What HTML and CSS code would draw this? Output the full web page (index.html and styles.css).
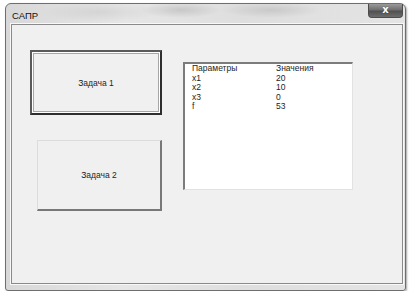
FILE: index.html
```html
<!DOCTYPE html>
<html lang="ru">
<head>
    <meta charset="UTF-8">
    <meta name="viewport" content="width=device-width, initial-scale=1.0">
    <title>САПР</title>
    <link rel="stylesheet" href="styles.css">
</head>
<body>
    <div class="window">
        <!-- заголовок окна -->
        <div class="titlebar">
            <span class="title">САПР</span>
            <span class="close">x</span>
        </div>
        <!-- рабочая область -->
        <div class="client">
            <div class="buttons">
                <button class="btn btn-default">Задача 1</button>
                <button class="btn btn-flat">Задача 2</button>
            </div>
            <div class="listbox">
                <div class="row"><span>Параметры</span><span>Значения</span></div>
                <div class="row"><span>x1</span><span>20</span></div>
                <div class="row"><span>x2</span><span>10</span></div>
                <div class="row"><span>x3</span><span>0</span></div>
                <div class="row"><span>f</span><span>53</span></div>
            </div>
        </div>
    </div>
</body>
</html>
```
FILE: styles.css
```css
*{
    margin: 0;
    padding: 0;
    box-sizing: border-box;
}

body{
    background-color: #ffffff;
    font-family: "Liberation Sans", Arial, sans-serif;
    font-size: 8.5px;
    color: #1e1e1e;
}

.window{
    width: 401px;
    height: 288px;
    margin: 3px 0 0 5px;
    border: 1px solid #6e6e6e;
    border-radius: 6px 6px 3px 3px;
    background: linear-gradient(to right, #d8d8d8, #e6e6e6 30%, #dedede 60%, #e4e4e4);
    padding: 0 2px 6px 5px;
    display: flex;
    flex-direction: column;
    box-shadow: 1px 1px 2px rgba(0,0,0,0.35);
}

.titlebar{
    height: 20px;
    display: flex;
    justify-content: space-between;
    align-items: flex-start;
    background:
        radial-gradient(ellipse 40px 8px at 170px 6px, rgba(150,150,150,0.35), transparent),
        radial-gradient(ellipse 50px 8px at 260px 6px, rgba(150,150,150,0.3), transparent),
        radial-gradient(ellipse 60px 10px at 90px 8px, rgba(170,170,170,0.25), transparent);
}

.title{
    padding: 6px 0 0 1px;
    line-height: 11px;
    font-size: 9.5px;
    color: #111111;
}

.close{
    width: 35px;
    height: 14px;
    border: 1px solid #4c4c4c;
    border-top: none;
    border-radius: 0 0 4px 4px;
    background: linear-gradient(to bottom, #9a9a9a, #6e6e6e 45%, #505050 55%, #6c6c6c);
    color: #ffffff;
    font-family: "DejaVu Sans", sans-serif;
    font-weight: bold;
    font-size: 10px;
    line-height: 12px;
    text-align: center;
    text-shadow: 0 0 1px #333;
}

.client{
    flex: 1;
    border: 1px solid #8a8a8a;
    background-color: #f0f0f0;
    box-shadow: 0 0 0 1px #f8f8f8;
    display: flex;
    align-items: flex-start;
}

.buttons{
    display: flex;
    flex-direction: column;
    align-items: flex-start;
    margin-left: 18px;
    padding-top: 25px;
}

.btn{
    font-family: "Liberation Sans", Arial, sans-serif;
    font-size: 8.5px;
    color: #1e1e1e;
    background-color: #f0f0f0;
}

.btn-default{
    width: 132px;
    height: 65px;
    border: 2px solid #5a5a5a;
    border-right-color: #2e2e2e;
    border-bottom-color: #2e2e2e;
    box-shadow: inset 0 0 0 1px #ffffff, inset 0 0 0 2px #a6a6a6;
}

.btn-flat{
    width: 125px;
    height: 71px;
    margin: 25px 0 0 7px;
    border-top: 1px solid #dcdcdc;
    border-left: 1px solid #dcdcdc;
    border-right: 2px solid #787878;
    border-bottom: 2px solid #787878;
}

.listbox{
    width: 170px;
    height: 128px;
    margin: 37px 0 0 21px;
    background-color: #ffffff;
    border-top: 2px solid #7c7c7c;
    border-left: 2px solid #7c7c7c;
    border-right: 1px solid #e2e2e2;
    border-bottom: 1px solid #e2e2e2;
    padding: 0 0 0 7px;
}

.row{
    display: grid;
    grid-template-columns: 84px auto;
    line-height: 9.5px;
}
```
